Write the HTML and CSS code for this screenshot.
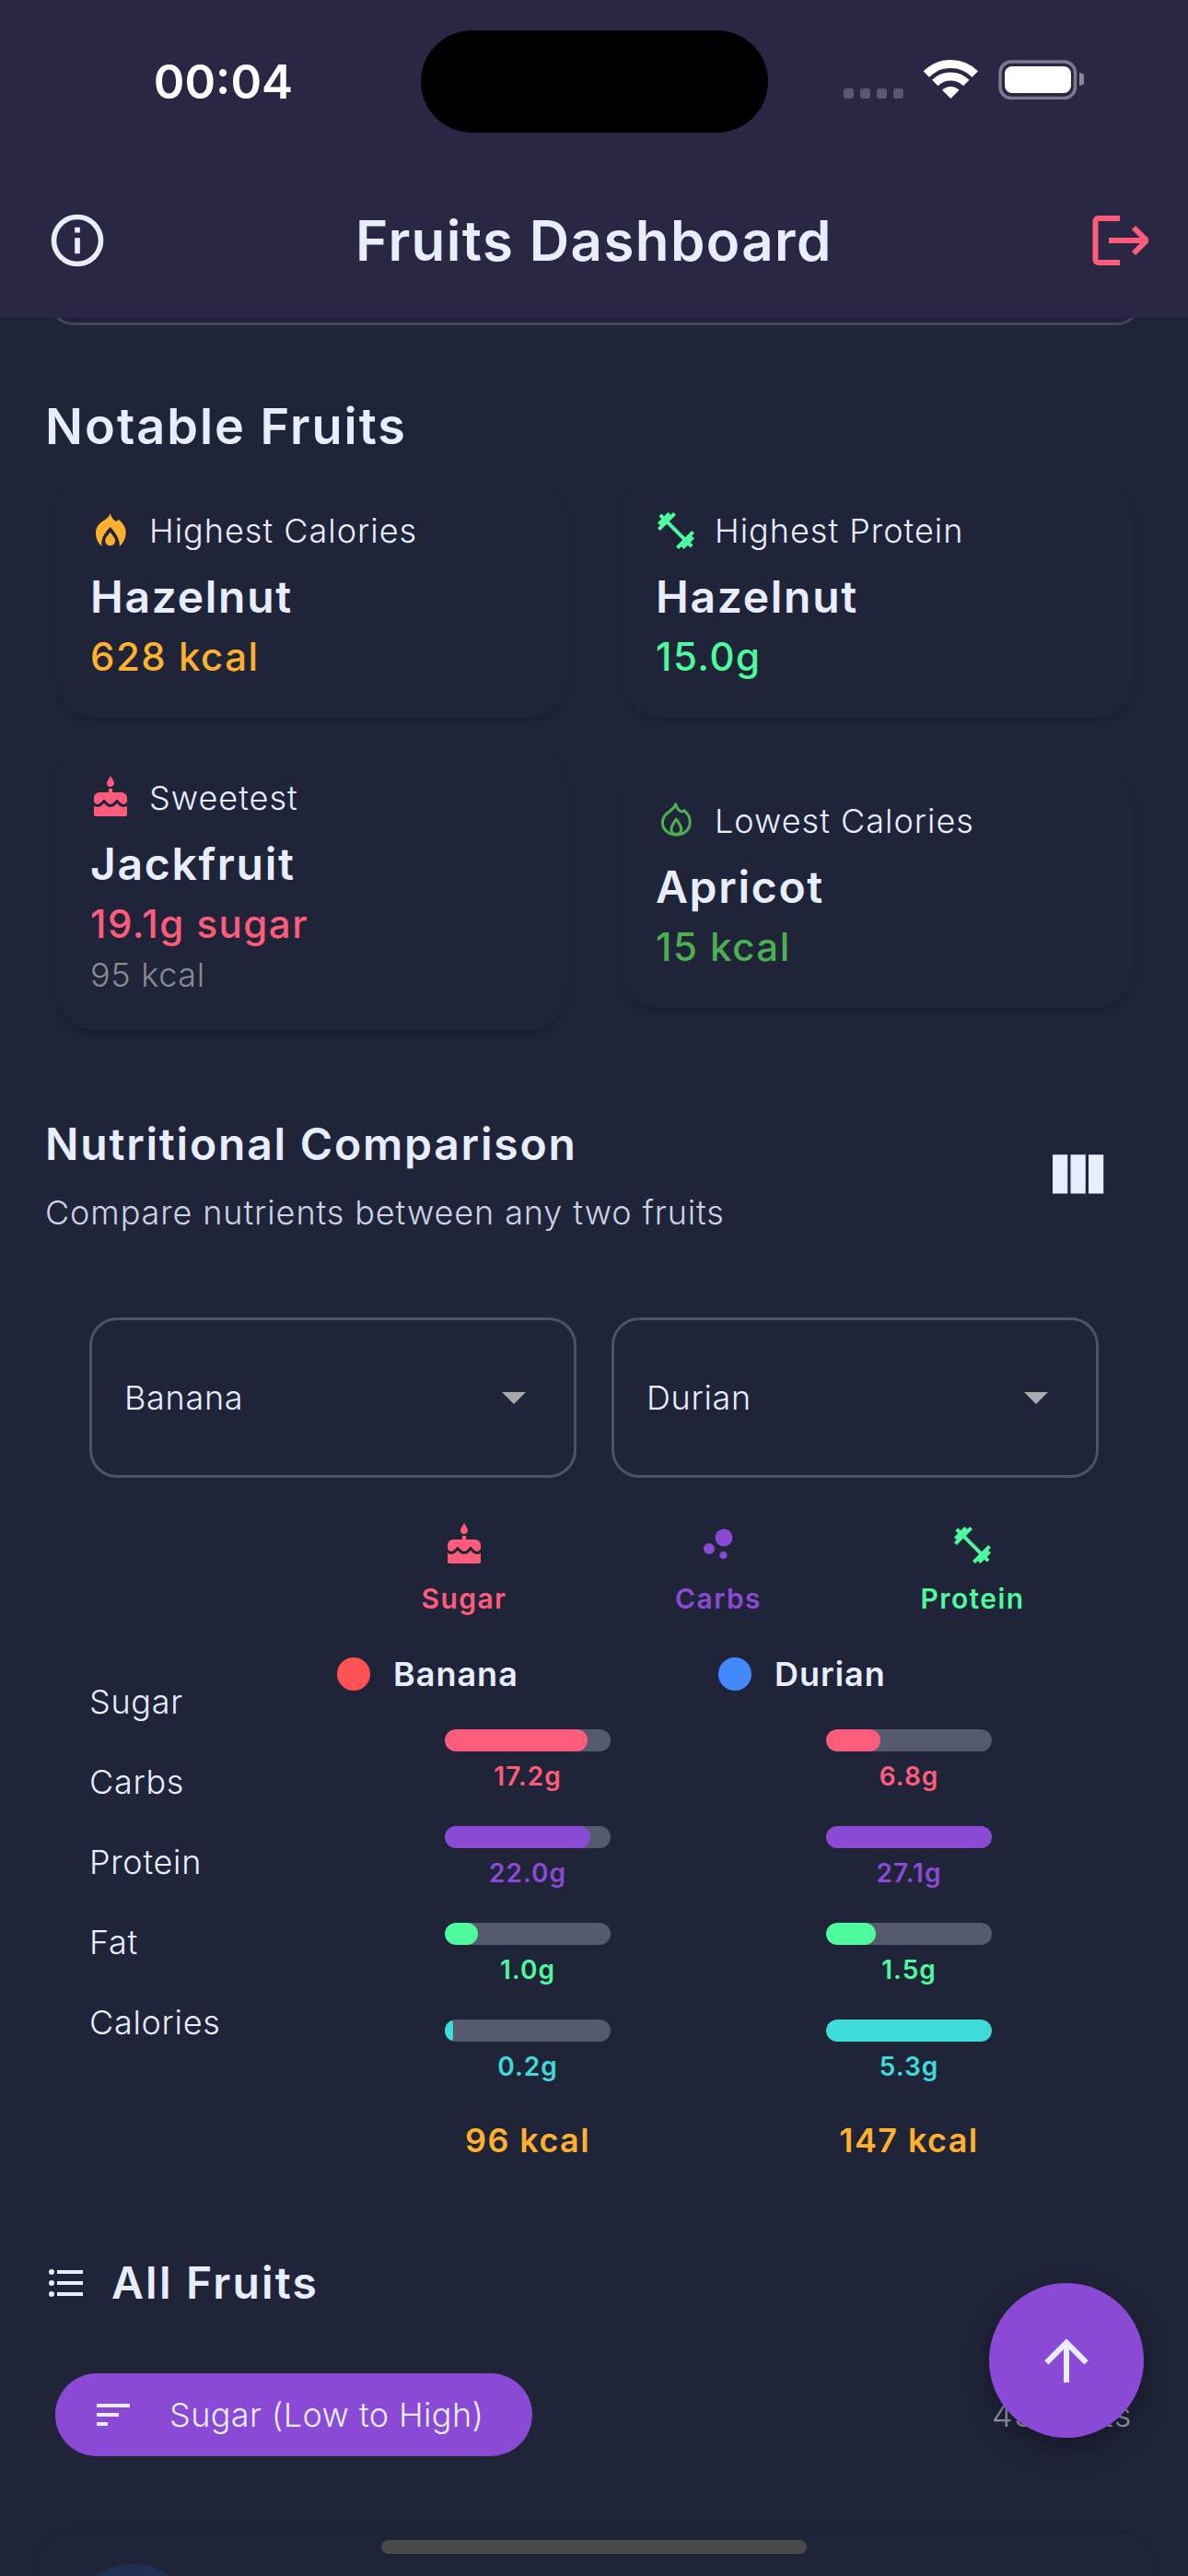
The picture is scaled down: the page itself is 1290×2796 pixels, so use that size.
FILE: index.html
```html
<!DOCTYPE html>
<html lang="en">
<head>
  <meta charset="UTF-8">
  <meta name="viewport" content="width=device-width, initial-scale=1.0">
  <title>Fruits Dashboard</title>
  <link rel="stylesheet" href="styles.css">
</head>
<body>
  <svg class="icon-defs" aria-hidden="true">
    <symbol id="i-cake" viewBox="0 0 24 24"><path d="M12,6C13.11,6 14,5.1 14,4C14,3.62 13.9,3.27 13.71,2.97L12,0L10.29,2.97C10.1,3.27 10,3.62 10,4A2,2 0 0,0 12,6M16.6,16L15.53,14.92L14.45,16C13.15,17.29 10.87,17.3 9.56,16L8.5,14.92L7.4,16C6.75,16.64 5.88,17 4.96,17C4.23,17 3.56,16.77 3,16.39V21A1,1 0 0,0 4,22H20A1,1 0 0,0 21,21V16.39C20.44,16.77 19.77,17 19.04,17C18.12,17 17.25,16.64 16.6,16M18,9H13V7H11V9H6A3,3 0 0,0 3,12V13.54C3,14.62 3.88,15.5 4.96,15.5C5.5,15.5 6,15.3 6.34,14.93L8.5,12.8L10.61,14.93C11.35,15.67 12.64,15.67 13.38,14.93L15.5,12.8L17.65,14.93C18,15.3 18.5,15.5 19.03,15.5C20.11,15.5 21,14.62 21,13.54V12A3,3 0 0,0 18,9Z"/></symbol>
    <symbol id="i-dumbbell" viewBox="0 0 24 24"><path d="M20.57,14.86L22,13.43L20.57,12L17,15.57L8.43,7L12,3.43L10.57,2L9.14,3.43L7.71,2L5.57,4.14L4.14,2.71L2.71,4.14L4.14,5.57L2,7.71L3.43,9.14L2,10.57L3.43,12L7,8.43L15.57,17L12,20.57L13.43,22L14.86,20.57L16.29,22L18.43,19.86L19.86,21.29L21.29,19.86L19.86,18.43L22,16.29L20.57,14.86Z"/></symbol>
  </svg>

  <div class="status-bar">
    <div class="time">00:04</div>
    <div class="island"></div>
    <svg class="status-icons" width="261" height="43" viewBox="0 0 261 43">
      <g fill="#5a5871">
        <rect x="0" y="31" width="11" height="11" rx="3"/>
        <rect x="18" y="31" width="11" height="11" rx="3"/>
        <rect x="36" y="31" width="11" height="11" rx="3"/>
        <rect x="54" y="31" width="11" height="11" rx="3"/>
      </g>
      <g fill="none" stroke="#fff" stroke-width="9">
        <path d="M89.8 15.5A37.5 37.5 0 0 1 142.8 15.5"/>
        <path d="M99.3 25A24 24 0 0 1 133.3 25"/>
      </g>
      <path d="M107.1 32.8A13 13 0 0 1 125.5 32.8L116.3 42Z" fill="#fff"/>
      <rect x="170" y="2" width="81.5" height="39.5" rx="12" fill="none" stroke="#7b7a8f" stroke-width="3.5"/>
      <rect x="175" y="7" width="72" height="29" rx="8" fill="#fff"/>
      <path d="M256 14A7 7 0 0 1 256 28Z" fill="#8b8a9c"/>
    </svg>
  </div>

  <header class="app-header">
    <svg class="info-icon" viewBox="0 0 24 24"><path d="M11,9H13V7H11M12,20C7.59,20 4,16.41 4,12C4,7.59 7.59,4 12,4C16.41,4 20,7.59 20,12C20,16.41 16.41,20 12,20M12,2A10,10 0 0,0 2,12A10,10 0 0,0 12,22A10,10 0 0,0 22,12A10,10 0 0,0 12,2M11,17H13V11H11V17Z"/></svg>
    <h1>Fruits Dashboard</h1>
    <svg class="logout-icon" width="62" height="58" viewBox="0 0 62 58" fill="none" stroke="#ff5c7c" stroke-width="6">
      <path d="M31 5H7.5A3 3 0 0 0 4.5 8V50A3 3 0 0 0 7.5 53H31"/>
      <path d="M19 29H57"/>
      <path d="M46 15L60 29L46 43"/>
    </svg>
  </header>
  <div class="scrolled-edge"></div>

  <section class="notable">
    <h2>Notable Fruits</h2>
    <div class="notable-grid">
      <div class="stat-card">
        <div class="stat-label">
          <svg class="icon" viewBox="0 0 48 48"><g transform="translate(8 5) scale(0.34)"><path fill="#ffb02e" d="M46 0C50 14 58 24 66 26C70 26 72 22 72 20C88 32 96 46 96 62C96 80 88 96 76 106C78 88 66 64 46 44C26 64 14 88 20 106C6 96 0 80 0 62C0 42 14 30 28 22C38 16 44 8 46 0ZM46 60C54 72 62 78 62 88A16 16 0 0 1 30 88C30 78 38 72 46 60Z"/></g></svg>
          <span>Highest Calories</span>
        </div>
        <div class="stat-name">Hazelnut</div>
        <div class="stat-value orange">628 kcal</div>
      </div>
      <div class="stat-card">
        <div class="stat-label">
          <svg class="icon mint"><use href="#i-dumbbell"/></svg>
          <span>Highest Protein</span>
        </div>
        <div class="stat-name">Hazelnut</div>
        <div class="stat-value mint">15.0g</div>
      </div>
      <div class="stat-card">
        <div class="stat-label">
          <svg class="icon pink"><use href="#i-cake"/></svg>
          <span>Sweetest</span>
        </div>
        <div class="stat-name">Jackfruit</div>
        <div class="stat-value pink">19.1g sugar</div>
        <div class="stat-sub">95 kcal</div>
      </div>
      <div class="stat-card">
        <div class="stat-label">
          <svg class="icon" viewBox="0 0 48 48"><g transform="translate(8 4.5) scale(0.34)" fill="none" stroke="#4caf50" stroke-width="9" stroke-linejoin="round"><path d="M46 4C50 18 58 26 66 28C70 28 72 26 73 24C86 34 92 48 92 62C92 86 72 102 48 102C24 102 4 86 4 62C4 42 18 32 30 24C38 18 44 12 46 4Z"/><path d="M48 52C56 64 64 74 64 84A16 16 0 0 1 32 84C32 74 40 64 48 52Z"/></g></svg>
          <span>Lowest Calories</span>
        </div>
        <div class="stat-name">Apricot</div>
        <div class="stat-value green">15 kcal</div>
      </div>
    </div>
  </section>

  <section class="comparison">
    <div class="comparison-head">
      <div>
        <h3>Nutritional Comparison</h3>
        <p>Compare nutrients between any two fruits</p>
      </div>
      <svg class="columns-icon" viewBox="0 0 24 24"><path d="M16,5V18H21V5M4,18H9V5H4M10,18H15V5H10V18Z"/></svg>
    </div>

    <div class="selects">
      <div class="select"><span>Banana</span><i class="caret"></i></div>
      <div class="select"><span>Durian</span><i class="caret"></i></div>
    </div>

    <div class="nutrient-tabs">
      <div class="tab pink"><svg class="icon"><use href="#i-cake"/></svg><span>Sugar</span></div>
      <div class="tab purple">
        <svg class="icon" viewBox="0 0 24 24"><circle cx="15" cy="8" r="4.7"/><circle cx="7" cy="14" r="3"/><circle cx="14.75" cy="17.5" r="2"/></svg>
        <span>Carbs</span>
      </div>
      <div class="tab mint"><svg class="icon"><use href="#i-dumbbell"/></svg><span>Protein</span></div>
    </div>

    <div class="compare-table">
      <div class="row-labels">
        <div>Sugar</div>
        <div>Carbs</div>
        <div>Protein</div>
        <div>Fat</div>
        <div>Calories</div>
      </div>
      <div class="fruit-col">
        <div class="legend"><i class="dot dot-red"></i><span>Banana</span></div>
        <div class="metric pink"><div class="track"><div class="fill" style="width: 86%"></div></div><div class="amount">17.2g</div></div>
        <div class="metric purple"><div class="track"><div class="fill" style="width: 88%"></div></div><div class="amount">22.0g</div></div>
        <div class="metric mint"><div class="track"><div class="fill" style="width: 20%"></div></div><div class="amount">1.0g</div></div>
        <div class="metric teal"><div class="track"><div class="fill" style="width: 5%"></div></div><div class="amount">0.2g</div></div>
        <div class="kcal">96 kcal</div>
      </div>
      <div class="fruit-col">
        <div class="legend"><i class="dot dot-blue"></i><span>Durian</span></div>
        <div class="metric pink"><div class="track"><div class="fill" style="width: 33%"></div></div><div class="amount">6.8g</div></div>
        <div class="metric purple"><div class="track"><div class="fill" style="width: 100%"></div></div><div class="amount">27.1g</div></div>
        <div class="metric mint"><div class="track"><div class="fill" style="width: 30%"></div></div><div class="amount">1.5g</div></div>
        <div class="metric teal"><div class="track"><div class="fill" style="width: 100%"></div></div><div class="amount">5.3g</div></div>
        <div class="kcal">147 kcal</div>
      </div>
    </div>
  </section>

  <section class="all-fruits">
    <div class="all-head">
      <svg class="icon light" viewBox="0 0 24 24"><path d="M7,5H21V7H7V5M7,13V11H21V13H7M4,4.5A1.5,1.5 0 0,1 5.5,6A1.5,1.5 0 0,1 4,7.5A1.5,1.5 0 0,1 2.5,6A1.5,1.5 0 0,1 4,4.5M4,10.5A1.5,1.5 0 0,1 5.5,12A1.5,1.5 0 0,1 4,13.5A1.5,1.5 0 0,1 2.5,12A1.5,1.5 0 0,1 4,10.5M7,19V17H21V19H7M4,16.5A1.5,1.5 0 0,1 5.5,18A1.5,1.5 0 0,1 4,19.5A1.5,1.5 0 0,1 2.5,18A1.5,1.5 0 0,1 4,16.5Z"/></svg>
      <h3>All Fruits</h3>
    </div>
    <div class="sort-row">
      <div class="sort-pill">
        <svg class="icon light" viewBox="0 0 24 24"><path d="M3,13H15V11H3M3,6V8H21V6M3,18H9V16H3V18Z"/></svg>
        <span>Sugar (Low to High)</span>
      </div>
      <div class="count">43 fruits</div>
    </div>
    <div class="fruit-card"><div class="avatar"></div></div>
  </section>

  <button class="fab" type="button">
    <svg viewBox="0 0 24 24"><path d="M13,20H11V8L5.5,13.5L4.08,12.08L12,4.16L19.92,12.08L18.5,13.5L13,8V20Z"/></svg>
  </button>
  <div class="home-indicator"></div>
</body>
</html>
```

FILE: styles.css
```css
html,
body {
  height: 2796px;
}
body {
  position: relative;
  margin: 0;
  overflow: hidden;
  background-color: #1f2438;
  color: #e8eeff;
  font-family: Inter, "Noto Sans", sans-serif;
}
h1,
h2,
h3,
p {
  margin: 0;
}
.icon-defs {
  position: absolute;
  width: 0;
  height: 0;
}
.icon {
  display: block;
  flex: none;
  width: 48px;
  height: 48px;
  fill: currentColor;
}
.pink { color: #ff5c7c; }
.purple { color: #8a4ad6; }
.mint { color: #4dfa9e; }
.teal { color: #3ddbd9; }
.orange { color: #ffb02e; }
.green { color: #4caf50; }
.light { color: #e8eeff; }

/* status bar + header */
.status-bar {
  display: flex;
  align-items: flex-start;
  height: 200px;
  padding-top: 33px;
  box-sizing: border-box;
  background-color: #2a2745;
}
.time {
  width: 457px;
  padding-top: 26px;
  padding-right: 139px;
  box-sizing: border-box;
  text-align: right;
  color: #fff;
  font-size: 51px;
  line-height: 60px;
  font-weight: 600;
}
.island {
  width: 377px;
  height: 111px;
  border-radius: 56px;
  background-color: #000;
}
.status-icons {
  margin-top: 32px;
  margin-left: 82px;
}
.app-header {
  position: relative;
  z-index: 1;
  display: grid;
  grid-template-columns: 1fr auto 1fr;
  align-items: center;
  height: 145px;
  padding: 0 50px 24px;
  box-sizing: border-box;
  background-color: #2a2745;
}
.info-icon {
  width: 68px;
  height: 68px;
  fill: #e8eeff;
}
.app-header h1 {
  font-size: 60px;
  line-height: 70px;
  font-weight: 600;
  letter-spacing: 1.4px;
}
.logout-icon {
  justify-self: end;
  margin-right: -7px;
}
/* bottom of the card that has scrolled under the header */
.scrolled-edge {
  height: 35px;
  margin: -30px 54px 0 56px;
  border: 3px solid #42455a;
  border-top: 0;
  border-radius: 0 0 22px 22px;
  background-color: #22223a;
}

/* notable fruits */
.notable {
  padding: 80px 60px 0 49px;
}
.notable h2 {
  font-size: 54px;
  line-height: 60px;
  font-weight: 600;
  letter-spacing: 2px;
}
.notable-grid {
  display: grid;
  grid-template-columns: 552px 554px;
  gap: 29px 62px;
  align-items: center;
  margin-top: 25px;
  margin-left: 13px;
}
.stat-card {
  padding: 34px 36px 40px;
  border-radius: 40px;
  background-color: #1f2438;
  box-shadow: 0 6px 10px -2px rgba(0, 0, 0, 0.18);
}
.stat-label {
  display: flex;
  align-items: center;
  gap: 18px;
  margin-left: -2px;
  font-size: 36px;
  line-height: 48px;
  font-weight: 300;
  letter-spacing: 1px;
}
.stat-name {
  margin-top: 19px;
  font-size: 48px;
  line-height: 58px;
  font-weight: 600;
  letter-spacing: 1.7px;
}
.stat-value {
  margin-top: 10px;
  font-size: 42px;
  line-height: 52px;
  font-weight: 500;
  letter-spacing: 1.5px;
}
.stat-sub {
  margin-top: 7px;
  margin-bottom: -2px;
  color: #8b8b90;
  font-size: 36px;
  line-height: 44px;
  font-weight: 300;
  letter-spacing: 0.7px;
}

/* comparison */
.comparison {
  padding-top: 96px;
}
.comparison-head {
  display: flex;
  align-items: center;
  justify-content: space-between;
  padding: 0 82px 0 49px;
}
.comparison-head h3 {
  font-size: 48px;
  line-height: 56px;
  font-weight: 600;
  letter-spacing: 1.8px;
}
.comparison-head p {
  margin-top: 24px;
  color: #cdd2e6;
  font-size: 36px;
  line-height: 44px;
  font-weight: 300;
  letter-spacing: 0.9px;
}
.columns-icon {
  width: 78px;
  height: 78px;
  fill: #e8eeff;
}
.selects {
  display: flex;
  gap: 38px;
  margin-top: 92px;
  padding: 0 97px;
}
.select {
  display: flex;
  flex: 1;
  align-items: center;
  justify-content: space-between;
  height: 174px;
  padding: 0 52px 0 35px;
  box-sizing: border-box;
  border: 3px solid #4e5266;
  border-radius: 30px;
  font-size: 36px;
  font-weight: 300;
  letter-spacing: 0.7px;
}
.caret {
  width: 0;
  height: 0;
  border-top: 13px solid #aaaaaa;
  border-right: 13px solid transparent;
  border-left: 13px solid transparent;
}
.nutrient-tabs {
  display: grid;
  grid-template-columns: repeat(3, 276px);
  margin-top: 49px;
  padding-left: 366px;
}
.tab {
  display: flex;
  flex-direction: column;
  align-items: center;
  gap: 15px;
  font-size: 30px;
  line-height: 38px;
  font-weight: 600;
  letter-spacing: 1.4px;
}
.compare-table {
  display: flex;
  margin-top: 41px;
  padding-left: 97px;
}
.row-labels {
  display: flex;
  flex-direction: column;
  gap: 43px;
  width: 269px;
  padding-top: 30px;
  font-size: 36px;
  line-height: 44px;
  font-weight: 300;
  letter-spacing: 0.7px;
}
.fruit-col {
  display: flex;
  flex-direction: column;
  align-items: center;
  width: 414px;
}
.legend {
  display: flex;
  align-items: center;
  align-self: flex-start;
  gap: 25px;
  margin-bottom: 2px;
  font-size: 36px;
  line-height: 44px;
  font-weight: 600;
  letter-spacing: 1px;
}
.dot {
  width: 36px;
  height: 36px;
  border-radius: 50%;
}
.dot-red { background-color: #ff5252; }
.dot-blue { background-color: #448aff; }
.metric {
  display: flex;
  flex-direction: column;
  align-items: center;
  margin-top: 36px;
}
.track {
  width: 180px;
  height: 24px;
  overflow: hidden;
  border-radius: 12px;
  background-color: #555a6c;
}
.fill {
  height: 100%;
  border-radius: 12px;
  background-color: currentColor;
}
.amount {
  margin-top: 9px;
  font-size: 28px;
  line-height: 36px;
  font-weight: 600;
  letter-spacing: 1px;
}
.kcal {
  margin-top: 40px;
  color: #ffb02e;
  font-size: 36px;
  line-height: 44px;
  font-weight: 600;
  letter-spacing: 1.4px;
}

/* all fruits */
.all-fruits {
  padding-top: 105px;
}
.all-head {
  display: flex;
  align-items: center;
  gap: 25px;
  padding-left: 48px;
}
.all-head h3 {
  font-size: 48px;
  line-height: 56px;
  font-weight: 600;
  letter-spacing: 2.2px;
}
.sort-row {
  display: flex;
  align-items: center;
  justify-content: space-between;
  margin-top: 70px;
  padding: 0 60px;
}
.sort-pill {
  display: flex;
  align-items: center;
  gap: 37px;
  width: 518px;
  height: 90px;
  padding-left: 39px;
  box-sizing: border-box;
  border-radius: 45px;
  background-color: #8a4ad6;
  font-size: 36px;
  font-weight: 300;
  letter-spacing: 0.4px;
}
.count {
  color: #9a9eb0;
  font-size: 36px;
  font-weight: 300;
  letter-spacing: 1.6px;
}
/* first list card, cut off by the bottom of the screen */
.fruit-card {
  height: 49px;
  margin: 81px 35px 0 37px;
  padding: 36px 37px 0;
  box-sizing: border-box;
  overflow: hidden;
  border-radius: 60px 60px 0 0;
  background-color: #1f2438;
  box-shadow: 0 -2px 6px rgba(0, 0, 0, 0.1);
}
.avatar {
  width: 140px;
  height: 140px;
  border-radius: 50%;
  background-color: #1f2f52;
}

/* things floating over the page */
.fab {
  position: absolute;
  top: 2478px;
  left: 1074px;
  display: flex;
  align-items: center;
  justify-content: center;
  width: 168px;
  height: 168px;
  padding: 0;
  border: 0;
  border-radius: 50%;
  background-color: #8a4ad6;
  box-shadow: 0 10px 30px rgba(0, 0, 0, 0.35);
}
.fab svg {
  width: 72px;
  height: 72px;
  fill: #e8eeff;
}
.home-indicator {
  position: absolute;
  top: 2757px;
  left: 414px;
  width: 462px;
  height: 15px;
  border-radius: 8px;
  background-color: #4a4a4a;
}
```
